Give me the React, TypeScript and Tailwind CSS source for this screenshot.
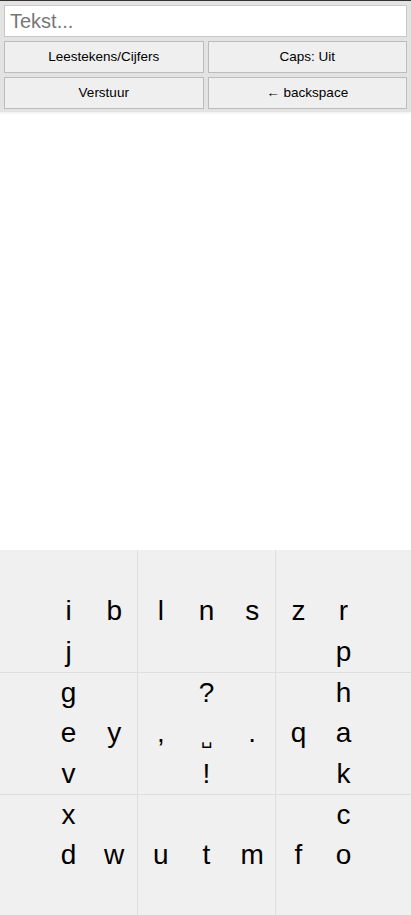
import { useState } from "react";

// 3x3 cells, each with a 3x3 grid of letters (row-major, "" = empty)
const cells: string[][] = [
  ["", "", "", "", "i", "b", "", "j", ""],
  ["", "", "", "l", "n", "s", "", "", ""],
  ["", "", "", "z", "r", "", "", "p", ""],
  ["", "g", "", "", "e", "y", "", "v", ""],
  ["", "?", "", ",", "\u2423", ".", "", "!", ""],
  ["", "h", "", "q", "a", "", "", "k", ""],
  ["", "x", "", "", "d", "w", "", "", ""],
  ["", "", "", "u", "t", "m", "", "", ""],
  ["", "c", "", "f", "o", "", "", "", ""],
];

const font = { fontFamily: '"Liberation Sans", Arial, sans-serif' };

export default function App() {
  const [text, setText] = useState("");
  const [caps, setCaps] = useState(false);

  return (
    <div className="flex h-[915px] w-[411px] flex-col bg-white text-black" style={font}>
      <div className="border-t border-[#333] bg-[#e3e3e3] px-1 pt-1 pb-[3px] shadow-[0_1px_2px_rgba(0,0,0,0.08)]">
        <input
          value={text}
          onChange={(e) => setText(e.target.value)}
          placeholder="Tekst..."
          className="h-8 w-full border border-[#c8c8c8] bg-white px-[5px] text-[20px] outline-none placeholder:text-[#777]"
        />
        <div className="mt-1 grid grid-cols-2 gap-1">
          <button type="button" className="h-8 border border-[#bcbcbc] bg-[#efefef] text-[13.5px]">
            Leestekens/Cijfers
          </button>
          <button
            type="button"
            onClick={() => setCaps(!caps)}
            className="h-8 border border-[#bcbcbc] bg-[#efefef] text-[13.5px]"
          >
            Caps: {caps ? "Aan" : "Uit"}
          </button>
          <button type="button" className="h-8 border border-[#bcbcbc] bg-[#efefef] text-[13.5px]">
            Verstuur
          </button>
          <button
            type="button"
            onClick={() => setText(text.slice(0, -1))}
            className="h-8 border border-[#bcbcbc] bg-[#efefef] text-[13.5px]"
          >
            ← backspace
          </button>
        </div>
      </div>

      <div className="flex-1" />

      <div className="grid h-[365px] grid-cols-[137px_137px_1fr] grid-rows-[122px_121px_1fr] gap-px bg-[#dedede]">
        {cells.map((cell, i) => (
          <div key={i} className="grid grid-cols-3 grid-rows-3 bg-[#f0f0f0]">
            {cell.map((ch, j) =>
              ch === "\u2423" ? (
                <div key={j} className="flex items-center justify-center pt-[10px] text-[18px] leading-none">
                  {ch}
                </div>
              ) : (
                <div key={j} className="flex items-center justify-center text-[28px] leading-none">
                  {ch}
                </div>
              ),
            )}
          </div>
        ))}
      </div>
    </div>
  );
}
